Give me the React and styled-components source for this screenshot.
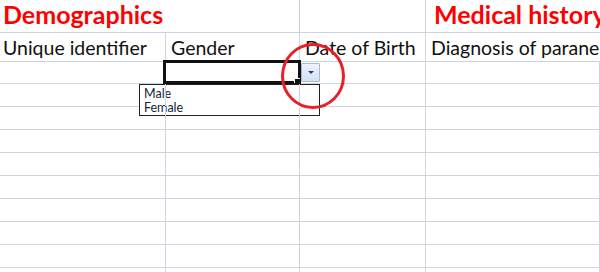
import React from 'react';
import styled, { createGlobalStyle } from 'styled-components';

const GlobalStyle = createGlobalStyle`
  html, body {
    margin: 0;
    padding: 0;
    background: #fff;
    overflow: hidden;
  }
`;

const GRID = '#ccd4e2';

const Sheet = styled.div`
  position: relative;
  width: 600px;
  height: 272px;
  overflow: hidden;
  font-family: Lato, 'Liberation Sans', sans-serif;
  color: #111;
`;

const Row = styled.div`
  display: grid;
  grid-template-columns: 166px 134px 126px 1fr;
  height: ${(p) => p.$h}px;
  box-sizing: border-box;
  border-bottom: 1px solid ${GRID};
`;

const Cell = styled.div`
  position: relative;
  box-sizing: border-box;
  border-right: 1px solid ${(p) => (p.$overflow ? 'transparent' : GRID)};
  padding-left: ${(p) => p.$pad || 5}px;
  white-space: nowrap;
  display: flex;
  align-items: flex-end;
  overflow: visible;
  z-index: ${(p) => (p.$overflow ? 2 : 1)};
`;

const Heading = styled.span`
  color: #ff0000;
  font-weight: 700;
  font-size: 25px;
  line-height: 1;
  padding-bottom: 5px;
`;

const Label = styled.span`
  font-size: 19.5px;
  line-height: 1;
  padding-bottom: 4px;
`;

const Selection = styled.div`
  position: absolute;
  left: -3px;
  top: -2px;
  width: 138px;
  height: 24px;
  box-sizing: border-box;
  border: 3px solid #111;
  z-index: 3;
`;

const FillHandle = styled.div`
  position: absolute;
  right: -2px;
  bottom: -2px;
  width: 5px;
  height: 4px;
  background: #111;
  border-left: 1px solid #fff;
  border-top: 1px solid #fff;
`;

const DropButton = styled.div`
  position: absolute;
  left: 135px;
  top: 1px;
  width: 19px;
  height: 19px;
  box-sizing: border-box;
  border: 1px solid #a9b8d1;
  border-radius: 1px;
  background: linear-gradient(#eef3fb, #d5e0f1);
  display: flex;
  align-items: center;
  justify-content: center;
  z-index: 4;
`;

const Arrow = styled.div`
  width: 0;
  height: 0;
  border-left: 3px solid transparent;
  border-right: 3px solid transparent;
  border-top: 3px solid #2b3a78;
`;

const List = styled.div`
  position: absolute;
  left: -27px;
  top: 22px;
  width: 181px;
  height: 32px;
  box-sizing: border-box;
  border: 1px solid #222;
  background: #fff;
  padding: 2px 0 0 4px;
  z-index: 4;
  font-family: Lato, 'Liberation Sans', sans-serif;
  font-size: 12.5px;
  color: #161d38;
`;

const ListItem = styled.div`
  height: 14px;
  line-height: 14px;
`;

const Annotation = styled.svg`
  position: absolute;
  left: 0;
  top: 0;
  pointer-events: none;
  z-index: 5;
`;

const heights = [33, 29, 22, 23, 23, 23, 23, 23, 23, 23, 23, 23];

export default function App() {
  return (
    <>
      <GlobalStyle />
      <Sheet>
        {heights.map((h, r) => (
          <Row key={r} $h={h}>
            {r === 0 && (
              <>
                <Cell $overflow $pad={3}>
                  <Heading>Demographics</Heading>
                </Cell>
                <Cell />
                <Cell />
                <Cell $overflow $pad={8}>
                  <Heading>Medical history</Heading>
                </Cell>
              </>
            )}
            {r === 1 && (
              <>
                <Cell $pad={3}>
                  <Label>Unique identifier</Label>
                </Cell>
                <Cell>
                  <Label>Gender</Label>
                </Cell>
                <Cell>
                  <Label>Date of Birth</Label>
                </Cell>
                <Cell $overflow $pad={5}>
                  <Label>Diagnosis of paraneoplastic syndrome</Label>
                </Cell>
              </>
            )}
            {r === 2 && (
              <>
                <Cell />
                <Cell>
                  <Selection>
                    <FillHandle />
                  </Selection>
                  <DropButton>
                    <Arrow />
                  </DropButton>
                  <List>
                    <ListItem>Male</ListItem>
                    <ListItem>Female</ListItem>
                  </List>
                </Cell>
                <Cell />
                <Cell />
              </>
            )}
            {r > 2 && (
              <>
                <Cell />
                <Cell />
                <Cell />
                <Cell />
              </>
            )}
          </Row>
        ))}
        <Annotation width="600" height="272">
          <ellipse cx="313" cy="76" rx="30.5" ry="31.5" fill="none" stroke="#e8202a" strokeWidth="3" />
        </Annotation>
      </Sheet>
    </>
  );
}
